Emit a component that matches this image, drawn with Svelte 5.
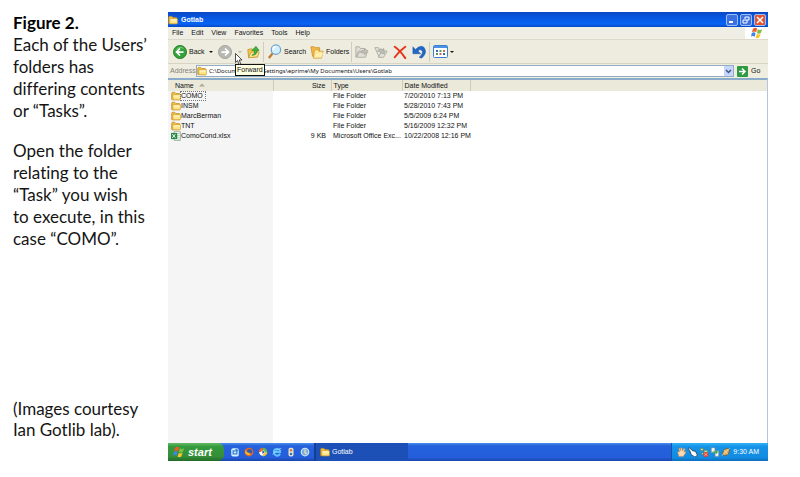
<script>
  const menus = ['File', 'Edit', 'View', 'Favorites', 'Tools', 'Help'];
  const files = [
    { name: 'COMO', size: '', type: 'File Folder', date: '7/20/2010 7:13 PM', focused: true },
    { name: 'INSM', size: '', type: 'File Folder', date: '5/28/2010 7:43 PM' },
    { name: 'MarcBerman', size: '', type: 'File Folder', date: '5/5/2009 6:24 PM' },
    { name: 'TNT', size: '', type: 'File Folder', date: '5/16/2009 12:32 PM' },
    { name: 'ComoCond.xlsx', size: '9 KB', type: 'Microsoft Office Exc...', date: '10/22/2008 12:16 PM', sheet: true }
  ];
  let address = $state('C:\\Documents and Settings\\eprime\\My Documents\\Users\\Gotlab');
</script>

{#snippet folder(size)}
  <svg width={size} height={size} viewBox="0 0 16 16" aria-hidden="true">
    <path d="M1 4q0-2 2-2h3l2 2h5q1 0 1 1v9H2q-1 0-1-1z" fill="#f0bd42" stroke="#b9821c" />
    <path d="M3 6h12v7q0 1-1 1H3z" fill="#ffe58c" stroke="#cf9a2e" />
    <path d="M4 7h10v2H4z" fill="#fff7c8" />
  </svg>
{/snippet}

{#snippet flag(size)}
  <svg width={size} height={size} viewBox="0 0 16 16" aria-hidden="true">
    <path d="M3 2q3-2 5 0L7 7Q4 5 1 7z" fill="#ee5a28" />
    <path d="M9 3q3 2 6 0l-2 5q-3 2-5 0z" fill="#7bc043" />
    <path d="M1 8q3-2 5 0l-1 5q-3-2-5 0z" fill="#3f86e8" />
    <path d="M8 9q2 2 5 0l-2 5q-3 2-5 0z" fill="#fcc62a" />
  </svg>
{/snippet}

<div class="page">
  <aside>
    <p><strong>Figure 2.</strong><br />Each of the Users’<br />folders has<br />differing contents<br />or “Tasks”.</p>
    <p>Open the folder<br />relating to the<br />“Task” you wish<br />to execute, in this<br />case “COMO”.</p>
    <p class="credit">(Images courtesy<br />Ian Gotlib lab).</p>
  </aside>

  <main>
    <header class="title">
      {@render folder(10)}
      <span>Gotlab</span>
      <div class="controls">
        <button aria-label="Minimize"><svg width="8" height="8" viewBox="0 0 8 8"><path d="M1 6h4" stroke="#fff" stroke-width="2" /></svg></button>
        <button aria-label="Restore"><svg width="8" height="8" viewBox="0 0 8 8"><path d="M3 3V1h4v3H5M1 4h4v3H1z" fill="none" stroke="#fff" /></svg></button>
        <button class="close" aria-label="Close"><svg width="8" height="8" viewBox="0 0 8 8"><path d="M1 1l6 6M7 1L1 7" stroke="#fff" stroke-width="1.5" /></svg></button>
      </div>
    </header>

    <nav class="menu">
      {#each menus as m}<button>{m}</button>{/each}
      <div class="brand">{@render flag(12)}</div>
    </nav>

    <div class="toolbar">
      <button class="back">
        <svg width="14" height="14" viewBox="0 0 16 16"><circle cx="8" cy="8" r="7.5" fill="#35a13a" stroke="#25812b" /><path d="M4 5q4-4 8-1" stroke="#8ad787" fill="none" /><path d="M12 8H5M8 4L4 8l4 4" stroke="#fff" stroke-width="2" fill="none" /></svg>
        Back
      </button>
      <button class="drop" aria-label="Back history"><i></i></button>
      <div class="forward">
        <button aria-label="Forward">
          <svg width="14" height="14" viewBox="0 0 16 16"><circle cx="8" cy="8" r="7.5" fill="#b9b9b3" stroke="#a1a19c" /><path d="M4 8h7M8 4l4 4-4 4" stroke="#fff" stroke-width="2" fill="none" /></svg>
        </button>
        <div class="tip" role="tooltip">Forward</div>
        <svg class="cursor" width="8" height="12" viewBox="0 0 8 12" aria-hidden="true"><path d="M.5.5v9l2-2 1.600 4 1.600-.7L4.200 7H7z" fill="#fff" stroke="#222" stroke-width=".8" /></svg>
      </div>
      <button class="drop faint" aria-label="Forward history"><i></i></button>
      <button aria-label="Up">
        <svg width="13" height="14" viewBox="0 0 16 16"><path d="M1 5l5-1 1 1h6v9l-11 1z" fill="#f3c64f" stroke="#c08f28" /><path d="M2 15l3-7h10l-2 6z" fill="#ffe68e" stroke="#c99b34" /><path d="M6 12q4-1 3-6H6l5-5 4 5h-3q1 6-6 6z" fill="#3eb53b" stroke="#1f812a" stroke-width=".7" /></svg>
      </button>
      <hr />
      <button class="search">
        <svg width="15" height="15" viewBox="0 0 16 16"><path d="M6 10l-4 5" stroke="#bd7b35" stroke-width="2.500" /><circle cx="9.500" cy="6" r="5" fill="#d2effc" stroke="#6ea2ce" stroke-width="1.300" /><path d="M6.500 6q0-3 3-3" stroke="#fff" stroke-width="1.500" fill="none" /></svg>
        Search
      </button>
      <button class="folders">
        <svg width="14" height="14" viewBox="0 0 16 16"><path d="M1 2h4l1 1h5v8l-8 2z" fill="#f2b848" stroke="#d29632" /><path d="M4 15l1-9 4-1 1 2h5l-2 8z" fill="#ffe597" stroke="#d8a33d" /><path d="M5 14l3-5h7l-2 5z" fill="#fff0ae" /></svg>
        Folders
      </button>
      <hr />
      <button aria-label="Move to">
        <svg width="14" height="14" viewBox="0 0 16 16" fill="#e0dfd7" stroke="#a9a9a1"><path d="M1 2h4l1 2h5v3H4l-3 7z" /><path d="M2 14l3-6h9l-2 6z" /><path d="M7 9q1-4 4-3V4l4 3-4 4V9z" fill="#c0c0b8" /></svg>
      </button>
      <button class="gap" aria-label="Copy to">
        <svg width="14" height="14" viewBox="0 0 16 16" fill="#e4e3db" stroke="#a9a9a1"><path d="M1 3h4l1 2h5v8l-5 1z" /><path d="M5 14l4-7h6l-4 7z" /><path d="M4 7q3-4 6-1l1-2 1 6-5-1 1-1q-2-1-4-1z" fill="#c0c0b8" /></svg>
      </button>
      <button class="gap" aria-label="Delete">
        <svg width="14" height="14" viewBox="0 0 16 16"><path d="M2 2q6 4 12 13M14 2Q7 7 2 14" stroke="#e3351b" stroke-width="2.200" fill="none" stroke-linecap="round" /></svg>
      </button>
      <button class="gap" aria-label="Undo">
        <svg width="14" height="14" viewBox="0 0 16 16"><path d="M1 2l2 2 1 1q6-6 10-2 4 6-3 12l-3-1q6-5 3-8-2-2-4 1l3 3H1z" fill="#2167c8" stroke="#164d9e" stroke-width=".5" /></svg>
      </button>
      <hr />
      <button aria-label="Views">
        <svg width="15" height="13" viewBox="0 0 15 13"><rect x=".5" y=".5" width="14" height="12" rx="1" fill="#fff" stroke="#3c7fce" /><path d="M1 2h13" stroke="#4c92e4" stroke-width="2" /><path d="M3 5h2v2H3zM10 8h2v2h-2z" fill="#3c67b5" /><path d="M6.500 5h2v2h-2zM3 8h2v2H3z" fill="#4a9c57" /><path d="M10 5h2v2h-2zM6.500 8h2v2h-2z" fill="#c66e4e" /></svg>
      </button>
      <button class="views-drop" aria-label="View options"><i></i></button>
    </div>

    <form class="address" onsubmit={(e) => e.preventDefault()}>
      <label for="path">Address</label>
      <div class="field">
        {@render folder(10)}
        <input id="path" bind:value={address} spellcheck="false" />
        <button class="pick" type="button" aria-label="Show addresses"><svg width="7" height="5" viewBox="0 0 7 5"><path d="M1 1l2.500 2.500L6 1" fill="none" stroke="#3e5482" stroke-width="1.500" /></svg></button>
      </div>
      <button class="go">
        <svg width="11" height="11" viewBox="0 0 11 11"><rect width="11" height="11" rx="1" fill="#2e9a42" /><path d="M2 5.500h6M5 2.500l3 3-3 3" stroke="#fff" stroke-width="1.500" fill="none" /></svg>
        Go
      </button>
    </form>

    <section>
      <table>
        <colgroup><col class="c-name" /><col class="c-size" /><col class="c-type" /><col class="c-date" /><col /></colgroup>
        <thead>
          <tr>
            <th>Name <svg width="6" height="4" viewBox="0 0 6 4"><path d="M0 3.500L3 .5l3 3z" fill="#aca899" /></svg></th>
            <th class="size">Size</th><th>Type</th><th>Date Modified</th><td></td>
          </tr>
        </thead>
        <tbody>
          {#each files as f}
            <tr>
              <td>
                <div class="file">
                  {#if f.sheet}
                    <svg width="10" height="10" viewBox="0 0 16 16" aria-hidden="true"><path d="M5 1h10v14H5z" fill="#fff" stroke="#6d9278" /><path d="M10 4h4M10 7h4M10 10h4M10 13h4" stroke="#7fb58a" /><path d="M0 3h10v10H0z" fill="#2a8848" /><path d="M2 5l5 6M7 5l-5 6" stroke="#fff" stroke-width="1.500" /></svg>
                  {:else}{@render folder(10)}{/if}
                  <span class:focused={f.focused}>{f.name}</span>
                </div>
              </td>
              <td class="size">{f.size}</td><td>{f.type}</td><td>{f.date}</td><td></td>
            </tr>
          {/each}
        </tbody>
      </table>
    </section>

    <footer>
      <button class="start">{@render flag(12)} start</button>
      <div class="quick">
        <svg viewBox="0 0 16 16"><rect x="2" y="2" width="12" height="13" rx="3" fill="#d9efff" /><path d="M5 6h6v5H5zM9 3l4 3" stroke="#3184cf" stroke-width="2" fill="none" /></svg>
        <svg viewBox="0 0 16 16"><circle cx="8" cy="8" r="7" fill="#e9641f" /><circle cx="9" cy="7" r="4" fill="#3659a8" /><path d="M2 4q2 6 6 5l3 2q-5 4-9-1z" fill="#f9b52f" /></svg>
        <svg viewBox="0 0 16 16"><circle cx="8" cy="8" r="6" fill="#fff" /><path d="M8 1a7 7 0 0 0-7 7h4q0-3 3-3z" fill="#e8632c" /><path d="M8 1a7 7 0 0 1 7 7h-4q0-3-3-3z" fill="#5bb54a" /><path d="M15 8a7 7 0 0 1-7 7v-4q3 0 3-3z" fill="#f4c430" /><path d="M7 5l4 3-4 3z" fill="#1d5ca8" /></svg>
        <svg viewBox="0 0 16 16"><path d="M13 11q-2 3-5 3-5-1-5-6t5-5q5 0 5 5H4" stroke="#62c4ff" stroke-width="3" fill="none" /><path d="M1 12Q5 4 15 2" stroke="#b4e4ff" fill="none" /></svg>
        <svg viewBox="0 0 16 16"><rect x="4" y="1" width="8" height="14" rx="3" fill="#e9e4d1" /><circle cx="8" cy="5" r="2" fill="#cf7741" /><circle cx="8" cy="11" r="2" fill="#356fad" /></svg>
        <svg viewBox="0 0 16 16"><circle cx="8" cy="8" r="6" fill="#77addd" stroke="#c9e0ec" stroke-width="2" /><path d="M8 4v5l3 2" stroke="#e9e4b6" stroke-width="2" fill="none" /></svg>
      </div>
      <button class="task">{@render folder(10)} Gotlab</button>
      <div class="tray">
        <svg viewBox="0 0 16 16"><path d="M3 15L1 8l2-1 1 1-1-6h2l1 4V1h2l1 5 2-4 2 1-2 5 3-1v2l-4 6z" fill="#ffd8ae" stroke="#bc814f" stroke-width=".8" /></svg>
        <svg viewBox="0 0 16 16"><path d="M2 1l5 5 5 1 3 6-4 3-6-4-1-4-3-5z" fill="#fff" stroke="#222" /></svg>
        <svg viewBox="0 0 16 16"><path d="M2 2h5v4H2zM8 5h6v5H8zM4 8v4h4" fill="#b8d9b2" stroke="#4a7855" /><circle cx="11" cy="12" r="4" fill="#e43c2b" /><path d="M9 10l4 4M13 10l-4 4" stroke="#fff" /></svg>
        <svg viewBox="0 0 16 16"><path d="M2 1h6v8H2zM8 6h6v9H8z" fill="#f2f4e9" stroke="#6c8298" /><path d="M4 7h5V4l4 4-4 4V9H4z" fill="#42a84c" /></svg>
        <svg viewBox="0 0 16 16"><path d="M2 11l3-7 5-2 4 3-3 7-5 2z" fill="#e0aa54" stroke="#5d4b35" /><path d="M1 14L14 2M5 5l6 7" stroke="#fff0b9" /></svg>
        <time>9:30 AM</time>
      </div>
    </footer>
  </main>
</div>

<style>
  .page { display: flex; box-sizing: border-box; min-height: 100vh; padding: 12px 32px 16px 0; background: #fff; }
  aside { display: flex; flex-direction: column; box-sizing: border-box; flex: 0 0 168px; padding: 0 0 21px 13px; font: 17px/22px Lato, "Open Sans", sans-serif; font-variant-ligatures: none; color: #151515; white-space: nowrap; }
  p { margin: 0 0 18px; }
  .credit { margin: auto 0 0; line-height: 21px; }
  strong { color: #000; }
  main { display: flex; flex-direction: column; flex: 1; min-width: 0; font: 7px/10px "Liberation Sans", Arial, sans-serif; color: #111; background: #ece9d8; }
  svg { display: block; flex: none; }
  button { display: flex; align-items: center; padding: 0; border: 0; background: none; font: inherit; color: inherit; }

  .title { display: flex; align-items: center; gap: 3px; height: 15px; padding: 0 2px 0 0; color: #fff; font-weight: 700; background: linear-gradient(#0b47c4, #0755dc 30%, #0863f4 80%, #0648c4); }
  .controls { display: flex; gap: 2px; margin-left: auto; }
  .controls button { justify-content: center; box-sizing: border-box; width: 12px; height: 12px; border: 1px solid #9fbdf5; border-radius: 2px; background: #3b70e2; }
  .controls .close { background: #e2532f; }

  .menu { display: flex; align-items: stretch; gap: 8px; height: 13px; padding-left: 4px; background: #efeee5; border-bottom: 1px solid #dcd9cb; box-sizing: border-box; }
  .brand { display: flex; align-items: center; justify-content: center; width: 23px; margin-left: auto; background: #fff; }

  .toolbar { display: flex; align-items: center; height: 24px; padding-left: 5px; background: #eeecdf; border-bottom: 1px solid #d8d4c2; box-sizing: border-box; }
  .toolbar button { gap: 2px; }
  .back { width: 30px; }
  .toolbar .drop { justify-content: center; width: 15px; }
  i { border: 2px solid transparent; border-top-color: #111; border-bottom: 0; }
  .faint i { border-top-color: #b8b5a7; }
  .forward { position: relative; }
  .tip { position: absolute; z-index: 2; left: 17px; top: 19px; padding: 0 1px; border: 1px solid #111; background: #ffffe1; }
  .cursor { position: absolute; z-index: 3; left: 17px; top: 8px; }
  hr { width: 1px; height: 20px; margin: 0 3px; border: 0; background: #d0cdbc; }
  .search { width: 38px; }
  .folders { width: 38px; margin-left: 5px; }
  .gap { margin-left: 5px; }
  .views-drop { margin-left: 2px; }

  .address { display: flex; align-items: stretch; height: 14px; padding: 1px 0; box-sizing: border-box; background: #efede0; }
  label { flex: 0 0 26px; padding-left: 2px; color: #85827a; line-height: 12px; }
  .field { display: flex; align-items: center; flex: 1; min-width: 0; border: 1px solid #92abc7; background: #fff; }
  input { flex: 1; min-width: 0; height: 10px; padding: 0 0 0 2px; border: 0; outline: 0; background: none; font: 6px/10px "Noto Sans", sans-serif; color: inherit; }
  .pick { align-self: stretch; justify-content: center; width: 9px; background: #c6d5fb; }
  .go { gap: 3px; width: 34px; padding-left: 3px; box-sizing: border-box; }

  section { flex: 1; border-top: 2px solid #8aabc9; border-right: 1px solid #b5c4df; background: linear-gradient(90deg, #f5f5f5 105px, #fff 105px); }
  table { width: 100%; table-layout: fixed; border-collapse: collapse; }
  .c-name { width: 105px; }
  .c-size { width: 58px; }
  .c-type { width: 71px; }
  .c-date { width: 68px; }
  td, th { height: 10px; padding: 0 0 0 2px; text-align: left; font-weight: 400; white-space: nowrap; }
  thead { background: #ebe9da; }
  thead th { height: 11px; border-right: 1px solid #cfcbb9; }
  th:first-child { padding-left: 7px; }
  th svg { display: inline-block; margin: 0 0 1px 3px; }
  td:first-child { padding-left: 3px; }
  .size { padding-right: 5px; text-align: right; }
  .file { display: flex; align-items: center; height: 10px; }
  .file span { line-height: 8px; }
  .file .focused { padding-right: 2px; outline: 1px dotted #777; }

  footer { display: flex; align-items: stretch; height: 18px; color: #fff; background: linear-gradient(#4a90ee, #2663dc 15%, #245ddb 80%, #1a45ab); }
  .start { gap: 3px; box-sizing: border-box; width: 56px; padding-left: 5px; border-radius: 0 6px 6px 0; font: italic bold 11px/16px "Liberation Sans", Arial, sans-serif; background: linear-gradient(#66b866, #349a3b 20%, #348e38 75%, #246b28); }
  .quick { display: flex; align-items: center; gap: 4px; padding-left: 6px; }
  .quick svg, .tray svg { width: 10px; height: 10px; }
  .task { gap: 2px; box-sizing: border-box; width: 94px; margin-left: 4px; padding-left: 4px; border-left: 2px solid #153d93; background: #1c50b6; }
  .tray { display: flex; align-items: center; gap: 1px; box-sizing: border-box; width: 97px; margin-left: auto; padding: 0 9px 0 5px; border-left: 1px solid #1554ae; background: linear-gradient(#31b2f4, #1593e9 20%, #128ce3 80%, #0e6cba); }
  time { margin-left: auto; white-space: nowrap; }
</style>
